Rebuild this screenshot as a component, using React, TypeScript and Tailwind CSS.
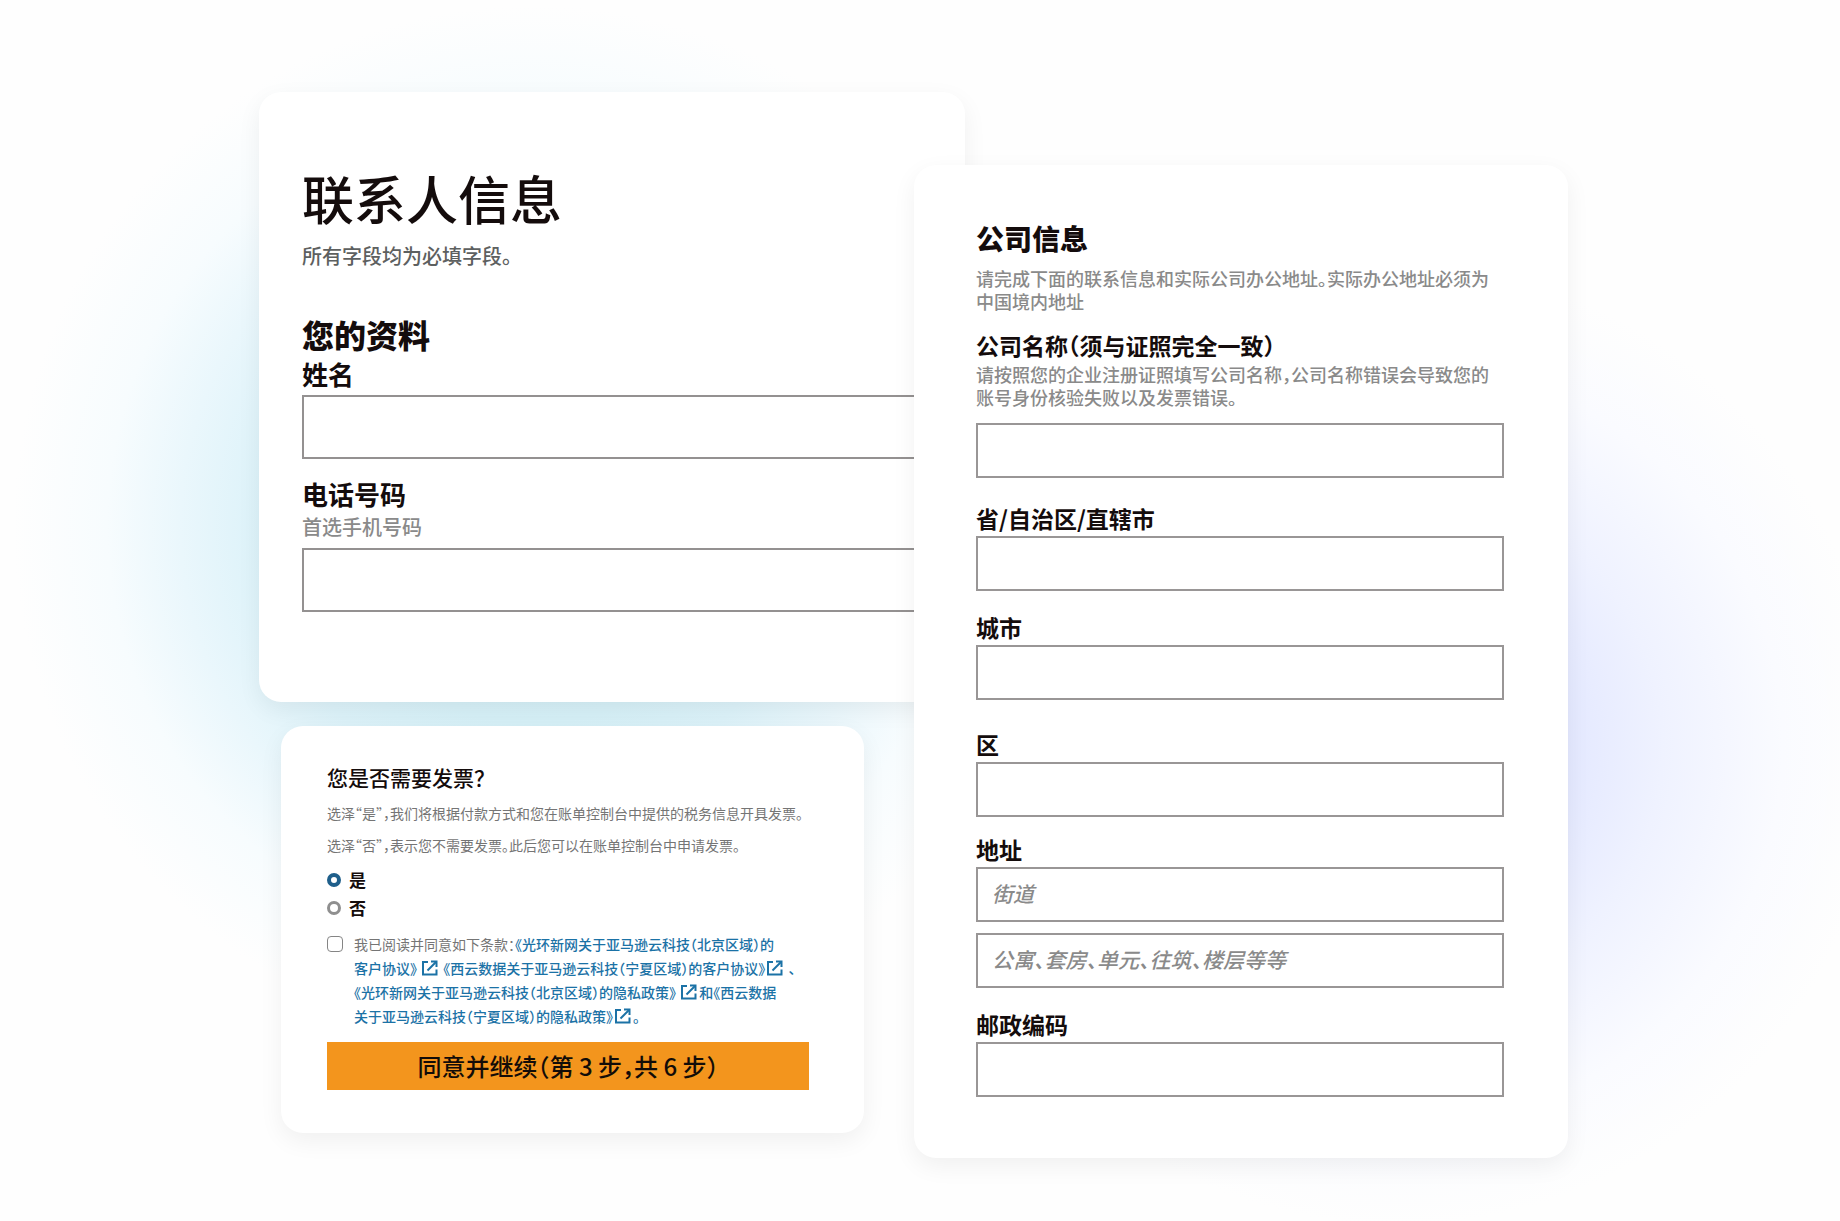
import clsx from 'clsx';

type FieldProps = {
  id: string;
  label: string;
  hint?: React.ReactNode;
  className?: string;
  placeholder?: string;
};

const companyInput =
  'block w-full h-[55px] border-2 border-[#999696] bg-transparent px-[14px] pb-1 text-[21px] font-medium italic outline-none placeholder:text-[#8a8a8a]';

function ContactField({ id, label, hint, className }: FieldProps) {
  return (
    <div className={className}>
      <label htmlFor={id} className="block text-[26px] leading-8 font-bold">
        {label}
      </label>
      {hint && (
        <p className="mt-[5px] mb-[9px] text-xl leading-6 font-medium text-[#8a8a8a]">{hint}</p>
      )}
      <input
        id={id}
        type="text"
        className="mt-[5px] block h-16 w-full border-2 border-[#949191] bg-transparent px-4 text-xl outline-none"
      />
    </div>
  );
}

function CompanyField({ id, label, hint, className, placeholder }: FieldProps) {
  return (
    <div className={className}>
      <label htmlFor={id} className="block pb-1 text-[23px] leading-7 font-bold">
        {label}
      </label>
      {hint && (
        <p className="mb-[14px] text-lg leading-[23px] font-medium text-[#8a8a8a]">{hint}</p>
      )}
      <input id={id} type="text" placeholder={placeholder} className={companyInput} />
    </div>
  );
}

function ExternalIcon() {
  return (
    <svg
      viewBox="0 0 16 16"
      className="mx-0.5 inline-block h-4 w-4 align-[-2px]"
      fill="none"
      stroke="currentColor"
      strokeWidth="2"
      aria-hidden="true"
    >
      <path d="M6 2H1v12.5h13.5V9.5" />
      <path d="M5.5 10.5L14 2" />
      <path d="M9 1.5h5.5V7" />
    </svg>
  );
}

function ContactCard() {
  return (
    <section className="rounded-[22px] bg-white pt-[76px] pb-[90px] pl-[43px] shadow-[0_8px_24px_rgba(0,0,0,0.06)]">
      <h1 className="text-[52px] leading-[60px] font-medium">联系人信息</h1>
      <p className="mt-4 text-xl leading-6 font-medium text-[#5d6060]">所有字段均为必填字段。</p>
      <h2 className="mt-[46px] text-[32px] leading-10 font-black">您的资料</h2>
      <ContactField id="name" label="姓名" className="mt-1" />
      <ContactField id="phone" label="电话号码" hint="首选手机号码" className="mt-[19px]" />
    </section>
  );
}

function InvoiceCard() {
  return (
    <section className="mr-[101px] ml-[22px] rounded-[22px] bg-white pt-[35px] pr-10 pb-[43px] pl-[46px] shadow-[0_8px_24px_rgba(0,0,0,0.06)]">
      <h2 className="text-[21px] leading-8 font-medium">您是否需要发票？</h2>
      <p className="mt-1 text-sm leading-8 text-[#757575]">
        选泽“是”，我们将根据付款方式和您在账单控制台中提供的税务信息开具发票。
      </p>
      <p className="text-sm leading-8 text-[#757575]">
        选泽“否”，表示您不需要发票。此后您可以在账单控制台中申请发票。
      </p>
      <fieldset className="mt-[5px]">
        {['是', '否'].map((option, i) => (
          <label key={option} className="flex items-center gap-2 text-[17px] leading-7 font-bold">
            <input
              type="radio"
              name="invoice"
              value={option}
              defaultChecked={i === 0}
              className="h-[14px] w-[14px] appearance-none rounded-full border-[3px] border-[#8f8f8f] checked:border-4 checked:border-[#1f5f8b]"
            />
            {option}
          </label>
        ))}
      </fieldset>
      <div className="mt-[10px] flex gap-[11px] text-sm leading-6">
        <input
          id="terms"
          type="checkbox"
          className="mt-1 h-4 w-4 shrink-0 appearance-none rounded border border-[#858585]"
        />
        <div className="font-medium whitespace-nowrap text-[#1b72a6]">
          <label htmlFor="terms" className="font-normal text-[#757575]">
            我已阅读并同意如下条款：
          </label>
          <a href="#sinnet-agreement">
            《光环新网关于亚马逊云科技（北京区域）的
            <br />
            客户协议》 <ExternalIcon />
          </a>{' '}
          <a href="#nwcd-agreement">
            《西云数据关于亚马逊云科技（宁夏区域）的客户协议》
            <ExternalIcon />
          </a>{' '}
          、
          <br />
          <a href="#sinnet-privacy">
            《光环新网关于亚马逊云科技（北京区域）的隐私政策》 <ExternalIcon />
          </a>
          和
          <a href="#nwcd-privacy">
            《西云数据
            <br />
            关于亚马逊云科技（宁夏区域）的隐私政策》
            <ExternalIcon />
          </a>
          。
        </div>
      </div>
      <div className="mt-[14px] pr-[15px]">
        <button type="submit" className="h-12 w-full bg-[#f3951d] text-2xl font-medium text-[#120c08]">
          同意并继续（第 3 步，共 6 步）
        </button>
      </div>
    </section>
  );
}

function CompanyCard() {
  return (
    <section className="mt-[73px] -ml-[51px] rounded-[22px] bg-white pt-[55px] pr-16 pb-[61px] pl-[62px] shadow-[0_8px_24px_rgba(0,0,0,0.06)]">
      <h2 className="text-[28px] leading-9 font-black">公司信息</h2>
      <p className="mt-[11px] text-lg leading-[23px] font-medium text-[#8a8a8a]">
        请完成下面的联系信息和实际公司办公地址。实际办公地址必须为
        <br />
        中国境内地址
      </p>
      <CompanyField
        id="company"
        label="公司名称（须与证照完全一致）"
        hint={
          <>
            请按照您的企业注册证照填写公司名称，公司名称错误会导致您的
            <br />
            账号身份核验失败以及发票错误。
          </>
        }
        className="mt-[18px]"
      />
      <CompanyField id="province" label="省/自治区/直辖市" className="mt-[26px]" />
      <CompanyField id="city" label="城市" className="mt-[22px]" />
      <CompanyField id="district" label="区" className="mt-[30px]" />
      <CompanyField id="street" label="地址" placeholder="街道" className="mt-[18px]" />
      <input
        type="text"
        aria-label="地址"
        placeholder="公寓、套房、单元、往筑、楼层等等"
        className={clsx(companyInput, 'mt-[11px]')}
      />
      <CompanyField id="postcode" label="邮政编码" className="mt-[22px]" />
    </section>
  );
}

export default function App() {
  return (
    <main
      lang="zh-CN"
      className="min-h-screen overflow-hidden bg-[#fefefe] bg-[radial-gradient(circle_520px_at_29%_43%,#cfedf6_0%,#d6f0f7_38%,#dcf2f9_52%,#eaf7fc_68%,#f7fcfe_82%,transparent_100%),radial-gradient(circle_480px_at_76%_61%,#d9dfff_0%,#e1e6ff_30%,#eff2ff_55%,#fafbff_80%,transparent_100%)] pt-[92px] pb-16 font-['Noto_Sans_CJK_SC',sans-serif] text-[#140c0c] [font-feature-settings:'halt']"
    >
      <form className="mx-auto grid max-w-[1322px] grid-cols-[706fr_603fr] items-start pr-[13px]">
        <div className="flex flex-col gap-6">
          <ContactCard />
          <InvoiceCard />
        </div>
        <CompanyCard />
      </form>
    </main>
  );
}
